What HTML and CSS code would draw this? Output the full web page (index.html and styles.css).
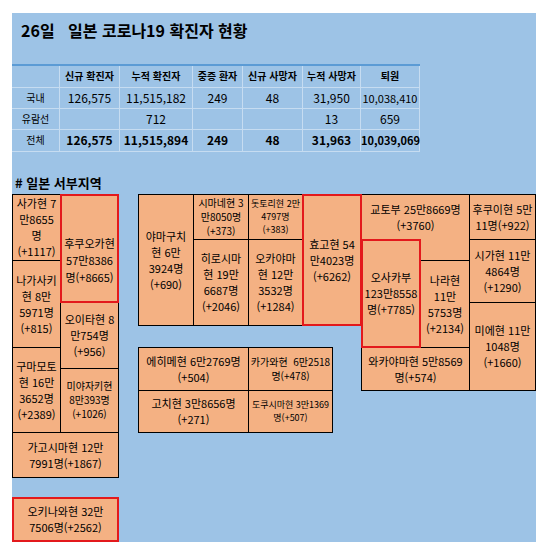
FILE: index.html
```html
<!DOCTYPE html>
<html lang="ko">
<head>
    <meta charset="UTF-8" />
    <title>일본 코로나19 확진자 현황</title>
    <link rel="stylesheet" href="styles.css">
</head>
<body>
    <div class="panel">
        <div class="title">26일&nbsp;&nbsp; 일본 코로나19 확진자 현황</div>

        <table class="stats">
            <tr class="head">
                <td></td>
                <td>신규 확진자</td>
                <td>누적 확진자</td>
                <td>중증 환자</td>
                <td>신규 사망자</td>
                <td>누적 사망자</td>
                <td>퇴원</td>
            </tr>
            <tr class="r1">
                <td class="label">국내</td>
                <td>126,575</td>
                <td>11,515,182</td>
                <td>249</td>
                <td>48</td>
                <td>31,950</td>
                <td class="small">10,038,410</td>
            </tr>
            <tr class="r2">
                <td class="label">유람선</td>
                <td></td>
                <td>712</td>
                <td></td>
                <td></td>
                <td>13</td>
                <td>659</td>
            </tr>
            <tr class="total">
                <td class="label">전체</td>
                <td>126,575</td>
                <td>11,515,894</td>
                <td>249</td>
                <td>48</td>
                <td>31,963</td>
                <td class="small">10,039,069</td>
            </tr>
        </table>

        <div class="region-title"># 일본 서부지역</div>

        <!-- west Japan tile map -->
        <div class="map">
            <div class="pref saga"><span>사가현 7<br>만8655<br>명<br>(+1117)</span></div>
            <div class="pref nagasaki"><span>나가사키<br>현 8만<br>5971명<br>(+815)</span></div>
            <div class="pref oita"><span>오이타현 8<br>만754명<br>(+956)</span></div>
            <div class="pref kumamoto"><span>구마모토<br>현 16만<br>3652명<br>(+2389)</span></div>
            <div class="pref miyazaki small"><span>미야자키현<br>8만393명<br>(+1026)</span></div>
            <div class="pref kagoshima"><span>가고시마현 12만<br>7991명(+1867)</span></div>

            <div class="pref yamaguchi"><span>야마구치<br>현 6만<br>3924명<br>(+690)</span></div>
            <div class="pref shimane small"><span>시마네현 3<br>만8050명<br>(+373)</span></div>
            <div class="pref tottori tiny"><span>돗토리현 2만<br>4797명<br>(+383)</span></div>
            <div class="pref hiroshima"><span>히로시마<br>현 19만<br>6687명<br>(+2046)</span></div>
            <div class="pref okayama"><span>오카야마<br>현 12만<br>3532명<br>(+1284)</span></div>

            <div class="pref kyoto"><span>교토부 25만8669명<br>(+3760)</span></div>
            <div class="pref nara"><span>나라현<br>11만<br>5753명<br>(+2134)</span></div>
            <div class="pref wakayama"><span>와카야마현 5만8569<br>명(+574)</span></div>
            <div class="pref fukui"><span>후쿠이현 5만<br>11명(+922)</span></div>
            <div class="pref shiga"><span>시가현 11만<br>4864명<br>(+1290)</span></div>
            <div class="pref mie"><span>미에현 11만<br>1048명<br>(+1660)</span></div>

            <div class="pref ehime"><span>에히메현 6만2769명<br>(+504)</span></div>
            <div class="pref kagawa small"><span>카가와현&nbsp; 6만2518<br>명(+478)</span></div>
            <div class="pref kochi"><span>고치현 3만8656명<br>(+271)</span></div>
            <div class="pref tokushima tiny"><span>도쿠시마현 3만1369<br>명(+507)</span></div>

            <!-- highlighted prefectures -->
            <div class="pref hot fukuoka"><span>후쿠오카현<br>57만8386<br>명(+8665)</span></div>
            <div class="pref hot hyogo"><span>효고현 54<br>만4023명<br>(+6262)</span></div>
            <div class="pref hot osaka"><span>오사카부<br>123만8558<br>명(+7785)</span></div>
            <div class="pref hot okinawa"><span>오키나와현 32만<br>7506명(+2562)</span></div>
        </div>
    </div>
</body>
</html>
```

FILE: styles.css
```css
body {
  margin: 0;
  background-color: #fff;
  font-family: "Noto Sans CJK KR", "Noto Sans", sans-serif;
  color: #000;
}
.panel {
  margin: 13px 0 0 12px;
  width: 524px;
  height: 529px;
  background-color: #9dc3e6;
}
.title {
  box-sizing: border-box;
  height: 51px;
  padding: 7px 0 0 9px;
  font-size: 16px;
  font-weight: bold;
  line-height: 20px;
}

/* stats table */
.stats {
  border-collapse: collapse;
  border-top: 2px solid #5b9bd5;
  table-layout: fixed;
  width: 408px;
}
.stats td {
  padding: 0;
  border: 1px solid #c6dcf1;
  text-align: center;
  font-size: 12px;
  line-height: 16px;
  white-space: nowrap;
}
.stats tr td:first-child {
  border-left: none;
  width: 47px;
}
.stats td:nth-child(2) { width: 59px; }
.stats td:nth-child(3) { width: 72px; }
.stats td:nth-child(4) { width: 49px; }
.stats td:nth-child(5) { width: 59px; }
.stats td:nth-child(6) { width: 57px; }
.stats tr { height: 22px; }
.stats .r1, .stats .r2 { height: 21px; }
.stats .head td {
  font-size: 10px;
  font-weight: bold;
}
.stats .label {
  font-size: 10px;
}
.stats .small {
  font-size: 11px;
}
.stats .total td {
  font-weight: bold;
}
.stats .total td.label {
  font-weight: normal;
}

.region-title {
  box-sizing: border-box;
  height: 42px;
  padding: 21px 0 0 3px;
  font-size: 13px;
  font-weight: bold;
  line-height: 20px;
}

/* tile map */
.map {
  display: grid;
  grid-template-columns: 48px 58px 20px 55px 55px 54px 30px 29px 59px 49px 66px;
  grid-template-rows: 45px 21px 42px 23px 22px 21px 22px 42px 45px 20px 44px;
}
.pref {
  display: flex;
  align-items: center;
  justify-content: center;
  margin: 0 -1px -1px 0;
  border: 1px solid #000;
  background-color: #f4b183;
  text-align: center;
  font-size: 11px;
  line-height: 16px;
  white-space: nowrap;
}
.pref.small {
  font-size: 10px;
  line-height: 14px;
}
.pref.tiny {
  font-size: 9px;
  line-height: 13px;
}
.pref.hot {
  border: 2px solid #e3191c;
  z-index: 1;
}

.saga { grid-column: 1 / 2; grid-row: 1 / 3; }
.fukuoka {
  grid-column: 2 / 3;
  grid-row: 1 / 4;
  padding-top: 24px;
  line-height: 17px;
}
.nagasaki { grid-column: 1 / 2; grid-row: 3 / 6; }
.oita { grid-column: 2 / 3; grid-row: 4 / 7; }
.kumamoto { grid-column: 1 / 2; grid-row: 6 / 9; }
.miyazaki { grid-column: 2 / 3; grid-row: 7 / 9; }
.kagoshima { grid-column: 1 / 3; grid-row: 9 / 10; }
.okinawa { grid-column: 1 / 3; grid-row: 11 / 12; }

.yamaguchi { grid-column: 4 / 5; grid-row: 1 / 5; }
.shimane { grid-column: 5 / 6; grid-row: 1 / 2; }
.tottori { grid-column: 6 / 7; grid-row: 1 / 2; }
.hiroshima { grid-column: 5 / 6; grid-row: 2 / 5; }
.okayama { grid-column: 6 / 7; grid-row: 2 / 5; }
.hyogo { grid-column: 7 / 9; grid-row: 1 / 5; }

.kyoto {
  grid-column: 9 / 11;
  grid-row: 1 / 3;
  align-items: flex-start;
  padding-top: 6px;
}
.osaka { grid-column: 9 / 10; grid-row: 2 / 6; }
.nara { grid-column: 10 / 11; grid-row: 3 / 6; }
.wakayama { grid-column: 9 / 11; grid-row: 6 / 8; }
.fukui { grid-column: 11 / 12; grid-row: 1 / 2; }
.shiga { grid-column: 11 / 12; grid-row: 2 / 4; }
.mie { grid-column: 11 / 12; grid-row: 4 / 8; }

.ehime { grid-column: 4 / 6; grid-row: 6 / 8; }
.kagawa { grid-column: 6 / 8; grid-row: 6 / 8; }
.kochi { grid-column: 4 / 6; grid-row: 8 / 9; }
.tokushima { grid-column: 6 / 8; grid-row: 8 / 9; }
```
